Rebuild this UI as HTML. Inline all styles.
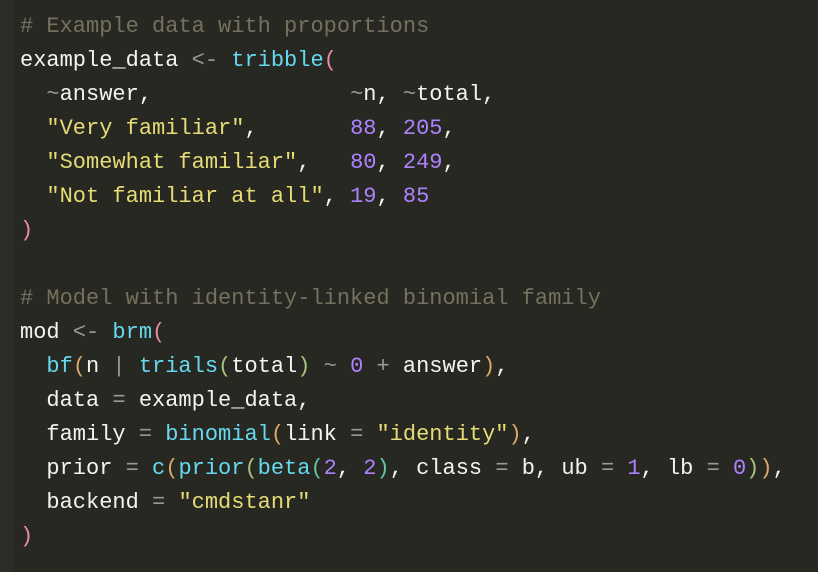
<!DOCTYPE html>
<html><head><meta charset="utf-8"><style>
html,body{margin:0;padding:0;width:818px;height:572px;overflow:hidden;background:#272822;}
.g{position:absolute;left:0;top:0;width:14px;height:572px;background:#2c2d28;}
pre{position:absolute;left:20px;top:10px;margin:0;font-family:"Liberation Mono",monospace;font-size:22px;line-height:34px;color:#f4f4ef;}
.c{color:#75715e}.f{color:#66d9ef}.s{color:#e6db74}.n{color:#ae81ff}.o{color:#9a9a94}
.p1{color:#e88ba6}.p2{color:#d9a86c}.p3{color:#a7c47f}.p4{color:#5fc6a8}
</style></head><body><div class="g"></div>
<pre><span class="c"># Example data with proportions</span>
example_data <span class="o">&lt;-</span> <span class="f">tribble</span><span class="p1">(</span>
  <span class="o">~</span>answer,               <span class="o">~</span>n, <span class="o">~</span>total,
  <span class="s">"Very familiar"</span>,       <span class="n">88</span>, <span class="n">205</span>,
  <span class="s">"Somewhat familiar"</span>,   <span class="n">80</span>, <span class="n">249</span>,
  <span class="s">"Not familiar at all"</span>, <span class="n">19</span>, <span class="n">85</span>
<span class="p1">)</span>

<span class="c"># Model with identity-linked binomial family</span>
mod <span class="o">&lt;-</span> <span class="f">brm</span><span class="p1">(</span>
  <span class="f">bf</span><span class="p2">(</span>n <span class="o">|</span> <span class="f">trials</span><span class="p3">(</span>total<span class="p3">)</span> <span class="o">~</span> <span class="n">0</span> <span class="o">+</span> answer<span class="p2">)</span>,
  data <span class="o">=</span> example_data,
  family <span class="o">=</span> <span class="f">binomial</span><span class="p2">(</span>link <span class="o">=</span> <span class="s">"identity"</span><span class="p2">)</span>,
  prior <span class="o">=</span> <span class="f">c</span><span class="p2">(</span><span class="f">prior</span><span class="p3">(</span><span class="f">beta</span><span class="p4">(</span><span class="n">2</span>, <span class="n">2</span><span class="p4">)</span>, class <span class="o">=</span> b, ub <span class="o">=</span> <span class="n">1</span>, lb <span class="o">=</span> <span class="n">0</span><span class="p3">)</span><span class="p2">)</span>,
  backend <span class="o">=</span> <span class="s">"cmdstanr"</span>
<span class="p1">)</span></pre>
</body></html>
